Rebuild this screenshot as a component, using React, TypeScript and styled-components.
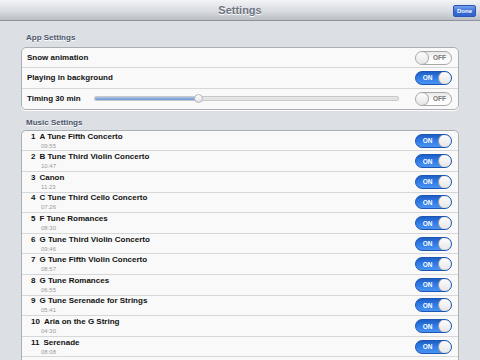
import React from "react";
import styled, { createGlobalStyle } from "styled-components";

const GlobalStyle = createGlobalStyle`
  html, body {
    margin: 0;
    padding: 0;
    width: 480px;
    height: 360px;
    overflow: hidden;
    background: #dcdfe4;
    font-family: "Liberation Sans", Arial, sans-serif;
  }
`;

const Page = styled.div`
  width: 480px;
  height: 360px;
  display: flex;
  flex-direction: column;
  background: #dcdfe4;
  overflow: hidden;
`;

const NavBar = styled.div`
  height: 21px;
  flex-shrink: 0;
  display: flex;
  align-items: center;
  justify-content: center;
  position: relative;
  background: linear-gradient(#f3f4f6, #d9dce1 55%, #b9bec6);
  border-bottom: 1px solid #8f949c;
  box-sizing: border-box;
`;

const Title = styled.div`
  font-size: 11px;
  font-weight: bold;
  color: #6f7582;
  text-shadow: 0 1px 0 #ffffff;
`;

const DoneButton = styled.div`
  position: absolute;
  right: 4px;
  top: 5px;
  width: 23px;
  height: 12px;
  border-radius: 2px;
  border: 1px solid #2a55b0;
  box-sizing: border-box;
  background: linear-gradient(#7aa2ec, #3c6fd9 50%, #2f60cc);
  color: #ffffff;
  font-size: 6px;
  font-weight: bold;
  display: flex;
  align-items: center;
  justify-content: center;
`;

const Content = styled.div`
  flex: 1;
  padding: 0 21px;
  display: flex;
  flex-direction: column;
`;

const SectionLabel = styled.div<{ $top: number; $bottom: number }>`
  padding: ${(p) => p.$top}px 0 0 5px;
  height: 12px;
  line-height: 12px;
  margin-bottom: ${(p) => p.$bottom}px;
  font-size: 8px;
  font-weight: bold;
  color: #4c566b;
  text-shadow: 0 1px 0 #ffffff;
`;

const Group = styled.div`
  flex-shrink: 0;
  background: #f9f9f9;
  border: 1px solid #abaeb3;
  border-radius: 5px;
  box-shadow: 0 1px 0 #ffffff;
  overflow: hidden;
`;

const Row = styled.div<{ $h: number }>`
  height: ${(p) => p.$h}px;
  box-sizing: border-box;
  display: flex;
  align-items: center;
  padding: 0 6px 0 5px;
  border-bottom: 1px solid #d6d7d9;
  &:last-child {
    border-bottom: none;
  }
`;

const Label = styled.div`
  font-size: 8px;
  font-weight: bold;
  color: #111111;
  width: 68px;
  white-space: nowrap;
`;

const Spacer = styled.div`
  flex: 1;
`;

const SliderTrack = styled.div`
  width: 306px;
  height: 3px;
  margin-right: 16px;
  border-radius: 2px;
  background: #e4e4e4;
  border: 1px solid #c9c9c9;
  display: flex;
  align-items: center;
`;

const SliderFill = styled.div`
  height: 3px;
  border-radius: 2px;
  background: linear-gradient(#a9c3ea, #6e97d6);
`;

const SliderKnob = styled.div`
  width: 9px;
  height: 9px;
  border-radius: 50%;
  margin-left: -4px;
  background: linear-gradient(#ffffff, #e1e1e1);
  border: 1px solid #b9b9b9;
  box-sizing: border-box;
  flex-shrink: 0;
`;

const SwitchBox = styled.div<{ $on: boolean }>`
  width: 37px;
  height: 14px;
  box-sizing: border-box;
  border-radius: 7px;
  border: 1px solid ${(p) => (p.$on ? "#1c56b4" : "#a8a8a8")};
  background: ${(p) =>
    p.$on
      ? "linear-gradient(#1f5fc5, #2f7ce8 50%, #4b92f0)"
      : "linear-gradient(#e9e9e9, #fdfdfd 60%, #ffffff)"};
  display: flex;
  flex-direction: ${(p) => (p.$on ? "row" : "row-reverse")};
  align-items: center;
  overflow: hidden;
  flex-shrink: 0;
`;

const SwitchText = styled.div<{ $on: boolean }>`
  flex: 1;
  text-align: center;
  font-size: 6.5px;
  font-weight: bold;
  color: ${(p) => (p.$on ? "#ffffff" : "#777777")};
`;

const Knob = styled.div`
  width: 14px;
  height: 14px;
  margin: -1px;
  border-radius: 50%;
  box-sizing: border-box;
  border: 1px solid #a3a3a3;
  background: linear-gradient(#fdfdfd, #e6e6e6);
`;

const Switch = ({ on }: { on: boolean }) => (
  <SwitchBox $on={on}>
    <SwitchText $on={on}>{on ? "ON" : "OFF"}</SwitchText>
    <Knob />
  </SwitchBox>
);

const Track = styled.div`
  display: flex;
  flex-direction: column;
  padding-left: 4px;
`;

const TrackTitle = styled.div`
  font-size: 8px;
  font-weight: bold;
  color: #111111;
  line-height: 10px;
  white-space: nowrap;
`;

const TrackNo = styled.span`
  margin-right: 4px;
`;

const Duration = styled.div`
  font-size: 6px;
  color: #9a9a9a;
  line-height: 8px;
  padding-left: 10px;
`;

const tracks = [
  ["A Tune Fifth Concerto", "09:55"],
  ["B Tune Third Violin Concerto", "10:47"],
  ["Canon", "11:23"],
  ["C Tune Third Cello Concerto", "07:26"],
  ["F Tune Romances", "08:30"],
  ["G Tune Third Violin Concerto", "09:46"],
  ["G Tune Fifth Violin Concerto", "08:57"],
  ["G Tune Romances", "06:55"],
  ["G Tune Serenade for Strings", "05:41"],
  ["Aria on the G String", "04:30"],
  ["Serenade", "08:08"],
];

export default function App() {
  return (
    <>
      <GlobalStyle />
      <Page>
        <NavBar>
          <Title>Settings</Title>
          <DoneButton>Done</DoneButton>
        </NavBar>
        <Content>
          <SectionLabel $top={11} $bottom={3}>
            App Settings
          </SectionLabel>
          <Group>
            <Row $h={20.3}>
              <Label>Snow animation</Label>
              <Spacer />
              <Switch on={false} />
            </Row>
            <Row $h={20.3}>
              <Label>Playing in background</Label>
              <Spacer />
              <Switch on={true} />
            </Row>
            <Row $h={20.3}>
              <Label>Timing 30 min</Label>
              <SliderTrack>
                <SliderFill style={{ width: "34%" }} />
                <SliderKnob />
              </SliderTrack>
              <Spacer />
              <Switch on={false} />
            </Row>
          </Group>
          <SectionLabel $top={7} $bottom={1}>
            Music Settings
          </SectionLabel>
          <Group>
            {tracks.map(([name, time], i) => (
              <Row $h={20.6} key={i}>
                <Track>
                  <TrackTitle>
                    <TrackNo>{i + 1}</TrackNo>
                    {name}
                  </TrackTitle>
                  <Duration>{time}</Duration>
                </Track>
                <Spacer />
                <Switch on={true} />
              </Row>
            ))}
            <Row $h={20.6} />
          </Group>
        </Content>
      </Page>
    </>
  );
}
